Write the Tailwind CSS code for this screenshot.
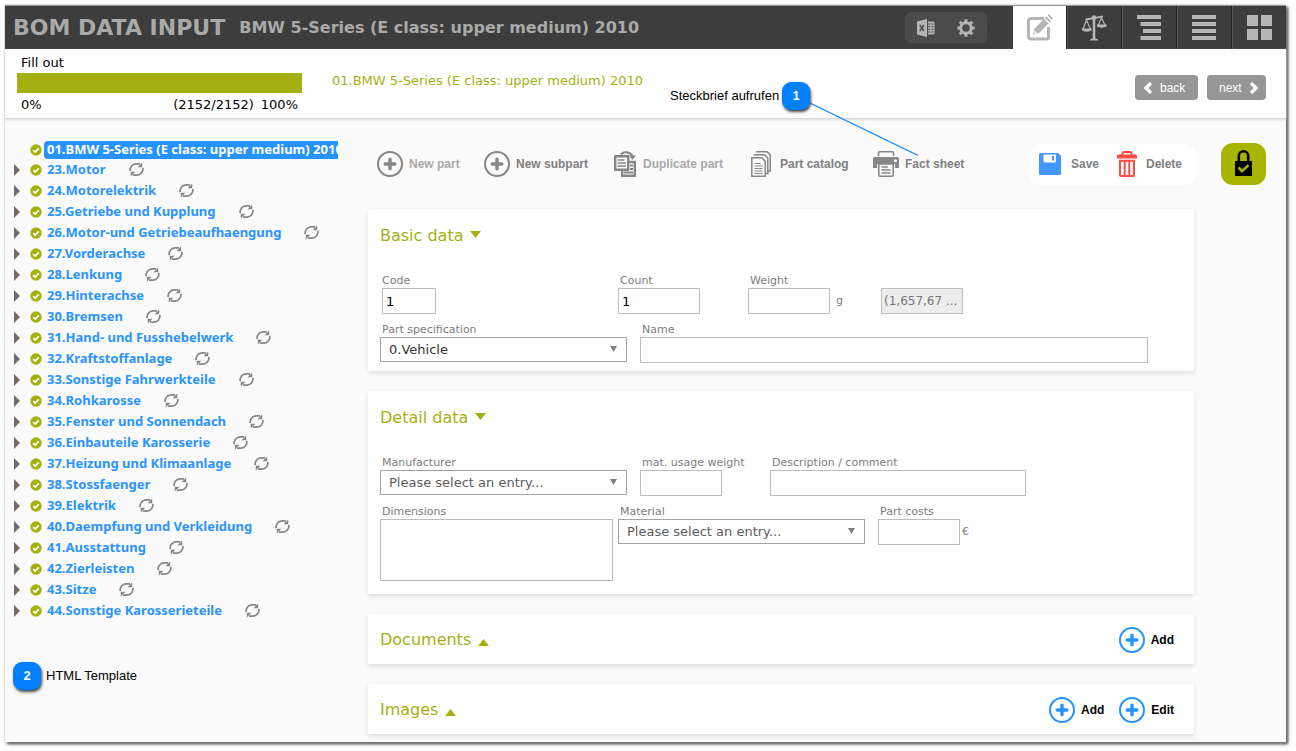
<!DOCTYPE html>
<html lang="en">
<head>
<meta charset="utf-8">
<meta name="viewport" content="width=device-width, initial-scale=1">
<title>BOM Data Input</title>
<script src="https://cdn.jsdelivr.net/npm/@tailwindcss/browser@4"></script>
</head>
<body class="relative flex min-h-screen bg-white pt-[5px] pr-[10px] pb-[9px] pl-[5px] font-['Verdana','DejaVu_Sans',sans-serif] text-[13px] text-black">

<svg class="hidden" aria-hidden="true">
  <symbol id="plus" viewBox="0 0 26 26"><circle cx="13" cy="13" r="12" fill="none" stroke="currentColor" stroke-width="2"/><path d="M13 8.200v9.600M8.200 13h9.600" stroke="currentColor" stroke-width="3.400" stroke-linecap="round"/></symbol>
  <symbol id="refresh" viewBox="0 0 15 15"><g fill="none" stroke="currentColor" stroke-width="1.700"><path d="M1.200 9.200C.6 5.500 3.200 1.900 7 1.900h4"/><path d="M13.800 5.800c.6 3.700-2 7.300-5.800 7.300H4"/></g><path d="M13.200.4v4.800H8.600zM1.800 14.600V9.800h4.600z" fill="currentColor"/></symbol>
  <symbol id="check" viewBox="0 0 12 12"><circle cx="6" cy="6" r="5.700" fill="#a2b20b"/><path d="M3.200 6.100l2 2 3.600-3.800" fill="none" stroke="#fff" stroke-width="1.700"/></symbol>
</svg>

<div class="flex min-w-0 flex-1 flex-col border-t border-[#8f9a94] bg-[#fafafa] shadow-[0_0_2px_#bbb,2px_2px_3px_#333]">

  <header class="flex h-[43px] bg-[#3d3d3d] pl-2 text-[#a9a9a9]">
    <div class="flex min-w-0 flex-1 items-center gap-3.5 whitespace-nowrap">
      <h1 class="text-[22px] font-bold">BOM DATA INPUT</h1>
      <span class="text-[16px] font-bold">BMW 5-Series (E class: upper medium) 2010</span>
    </div>
    <div class="mt-1.5 mr-[26px] flex h-[31px] w-[82px] items-center gap-[22px] rounded-md bg-[#4b4b4b] pl-3 text-[#b4b4b4]">
      <button type="button" aria-label="Export to Excel"><svg class="block h-[18px] w-[18px]" viewBox="0 0 18 18"><path d="M0 2.500L10 0v18L0 15.500zM11 2.500h6.500v13H11z" fill="currentColor"/><path d="M2.800 6l4.200 6M7 6l-4.200 6" stroke="#4b4b4b" stroke-width="1.500"/><path d="M11 5h5.500M11 7.700h5.500M11 10.400h5.500M11 13h5.500" stroke="#4b4b4b"/><path d="M13.800 4v10" stroke="currentColor"/></svg></button>
      <button type="button" aria-label="Settings"><svg class="block size-[18px]" viewBox="0 0 18 18"><circle cx="9" cy="9" r="5.300" fill="none" stroke="currentColor" stroke-width="3"/><path d="M9 .3v3M9 14.700v3M.3 9h3M14.700 9h3M2.800 2.800l2.100 2.100M13.100 13.100l2.100 2.100M15.200 2.800l-2.100 2.100M4.900 13.100l-2.100 2.100" stroke="currentColor" stroke-width="3"/></svg></button>
    </div>
    <nav class="flex text-[#b5b5b5]" aria-label="Views">
      <a href="#" aria-label="Data input" class="flex w-[53px] items-center justify-center bg-white"><svg class="h-[27px] w-[26px]" viewBox="0 0 26 27"><path d="M17 4.500H4a2.500 2.500 0 0 0-2.500 2.500v15.500A2.500 2.500 0 0 0 4 25h15a2.500 2.500 0 0 0 2.500-2.500V13" fill="none" stroke="currentColor" stroke-width="3"/><path d="M6 20.500l1.500-6 9.500-9.500 4.500 4.500-9.500 9.500zM18 4l1.500-1.500L24 7l-1.500 1.500zM20.500 1.500L21.800.3 26 4.500l-1.200 1.300z" fill="currentColor"/><path d="M7.500 16.500l2.500 2.500-2.700.7z" fill="#fff"/></svg></a>
      <a href="#" aria-label="Balance" class="flex w-[55px] items-center justify-center border-l border-[#222] shadow-[inset_1px_0_0_#565656]"><svg class="h-[26px] w-[26px]" viewBox="0 0 26 26"><g fill="none" stroke="currentColor"><path d="M4.500 4.500L22 1.500" stroke-width="2"/><path d="M13 2v22" stroke-width="2.600"/><path d="M5.500 5L1.500 15.500M5.500 5l4.500 10.500M20.500 3l-4 9M20.500 3l4.500 9" stroke-width="1.200"/></g><circle cx="13" cy="2.500" r="2.300" fill="currentColor"/><path d="M.5 13.500h10.500c-.6 2.300-2.400 3.300-5.200 3.300S1 15.800.5 13.500zM15.500 9.500H26c-.6 2.300-2.400 3.300-5.200 3.300s-4.700-1-5.300-3.300zM8.500 25.500c.5-1.500 2-2 4.500-2s4 .5 4.500 2z" fill="currentColor"/></svg></a>
      <a href="#" aria-label="Tree view" class="flex w-[55px] items-center justify-center border-l border-[#222] shadow-[inset_1px_0_0_#565656]"><svg class="h-[25px] w-6" viewBox="0 0 24 25"><path d="M0 0h24v4H0zM3.500 7H24v4H3.500zM6 14h18v4H6zM3.500 21H24v4H3.500z" fill="currentColor"/></svg></a>
      <a href="#" aria-label="List view" class="flex w-[55px] items-center justify-center border-l border-[#222] shadow-[inset_1px_0_0_#565656]"><svg class="h-[25px] w-6" viewBox="0 0 24 25"><path d="M0 0h24v4H0zM0 7h24v4H0zM0 14h24v4H0zM0 21h24v4H0z" fill="currentColor"/></svg></a>
      <a href="#" aria-label="Grid view" class="flex w-[55px] items-center justify-center border-l border-[#222] shadow-[inset_1px_0_0_#565656]"><svg class="h-[25px] w-[25px]" viewBox="0 0 25 25"><path d="M0 0h11v11H0zM14 0h11v11H14zM0 14h11v11H0zM14 14h11v11H14z" fill="currentColor"/></svg></a>
    </nav>
  </header>

  <section class="flex h-[70px] border-b border-[#d6dad9] bg-white pl-3 shadow-[0_1px_2px_#ddd]">
    <div class="w-[285px] pt-1">
      <div id="fill" class="pl-1 leading-5 text-[13px]">Fill out</div>
      <div role="progressbar" aria-labelledby="fill" aria-valuenow="100" class="h-5 bg-[#a4b012]"></div>
      <div class="flex pr-1 pl-1 text-[13px] leading-6"><span class="flex-1">0%</span><span class="mr-[7px]">(2152/2152)</span><span>100%</span></div>
    </div>
    <div class="ml-[30px] flex-1 pt-[22px] text-[13px] leading-5 text-[#a4b012]">01.BMW 5-Series (E class: upper medium) 2010</div>
    <div class="mt-[26px] mr-5 flex h-[25px] gap-[9px] font-['Liberation_Sans',Arial,sans-serif] text-[12px] text-white">
      <button type="button" class="flex w-[63px] items-center gap-[7px] rounded bg-[#969696] pl-2"><svg class="h-3 w-2.5" viewBox="0 0 10 12"><path d="M8 1L3 6l5 5" fill="none" stroke="#fff" stroke-width="3.400"/></svg>back</button>
      <button type="button" class="flex w-[59px] items-center gap-[7px] rounded bg-[#969696] pl-3">next<svg class="h-3 w-2.5" viewBox="0 0 10 12"><path d="M2 1l5 5-5 5" fill="none" stroke="#fff" stroke-width="3.400"/></svg></button>
    </div>
  </section>

  <div class="flex flex-1">
    <aside class="w-[333px] shrink-0 pt-[21px]">
      <ul id="tree" class="font-['Noto_Sans',sans-serif] font-bold text-[#2a94ff]">
        <li class="flex h-[19px] items-center overflow-hidden pl-[25px] whitespace-nowrap">
          <svg class="mr-0.5 size-3 shrink-0"><use href="#check"/></svg>
          <a href="#" class="h-[18px] flex-1 overflow-hidden rounded-l bg-[#2693ff] pl-[3px] leading-4 text-white">01.BMW 5-Series (E class: upper medium) 2010</a>
        </li>
      </ul>
    </aside>

    <main class="min-w-0 flex-1 pl-[30px] pb-2">
      <div class="mt-6 flex h-[42px] items-center pl-[9px] font-['Liberation_Sans',Arial,sans-serif] text-[12px] font-bold whitespace-nowrap text-[#808080]">
        <button type="button" class="flex w-[107px] items-center gap-[6px] text-[#a9a9a9]"><svg class="size-[26px] text-[#868686]"><use href="#plus"/></svg>New part</button>
        <button type="button" class="flex w-[130px] items-center gap-[6px]"><svg class="size-[26px] text-[#868686]"><use href="#plus"/></svg>New subpart</button>
        <button type="button" class="flex w-[137px] items-center gap-[7px] text-[#a9a9a9]"><svg class="h-[26px] w-[22px] text-[#868686]" viewBox="0 0 22 26"><g fill="none" stroke="currentColor"><path d="M7 3.500C9 .3 16.500.2 18.500 5.500" stroke-width="2.200"/><path d="M8.200 11h12.600v13.800H8.200z" fill="#fafafa" stroke-width="2.400"/><path d="M10 21.500h9M16 14.500h3M16 18h3" stroke-width="2"/><path d="M1.200 5.200h13v13.600h-13z" fill="#fafafa" stroke-width="2.400"/><path d="M3.500 9h7M3.500 12h8.500M3.500 15h8.500" stroke-width="1.400"/></g><path d="M15 4.500h7L18.500 9z" fill="currentColor"/></svg>Duplicate part</button>
        <button type="button" class="flex w-[122px] items-center gap-[9px]"><svg class="h-[26px] w-5 text-[#868686]" viewBox="0 0 20 26"><g fill="none" stroke="currentColor" stroke-width="1.500"><path d="M5 .8h11l3.300 3.300V20h-2.300M2.800 3.800h10.800l3.200 3.200v15.500h-2.300M.8 6.800h10l3.400 3.400v15H.8z"/><path d="M3.500 12.500h6M3.500 15h8M3.500 17.500h8M3.500 20h8M3.500 22.500h8" stroke-width="1.200"/></g></svg>Part catalog</button>
        <button type="button" class="flex items-center gap-[6px]"><svg class="h-[26px] w-[26px] text-[#868686]" viewBox="0 0 26 26"><path d="M5.500 5V1.800q0-1 1-1h13q1 0 1 1V5" fill="none" stroke="currentColor" stroke-width="1.600"/><path d="M2 6h22a2 2 0 0 1 2 2v9h-4v-4H4v4H0V8a2 2 0 0 1 2-2z" fill="currentColor"/><circle cx="22.500" cy="9.700" r="1.500" fill="#fff"/><path d="M5.800 13h14.400v10.700q0 1.500-1.500 1.500H7.300q-1.500 0-1.500-1.500z" fill="#fafafa" stroke="currentColor" stroke-width="1.600"/><path d="M8.500 16h6.500M8.500 19h9M8.500 22h9" stroke="currentColor" stroke-width="1.400"/></svg>Fact sheet</button>
        <div class="mr-[25px] ml-auto flex h-[41px] w-[167px] items-center rounded-xl bg-white pl-2.5">
          <button type="button" class="flex w-[78px] items-center gap-2.5"><svg class="h-[22px] w-[22px]" viewBox="0 0 22 22"><path d="M1.500 0H19l3 3v17.500a1.500 1.500 0 0 1-1.500 1.500h-19A1.500 1.500 0 0 1 0 20.500v-19A1.500 1.500 0 0 1 1.500 0z" fill="#4496ff"/><path d="M4.500 1.500h12.500V8a1.500 1.500 0 0 1-1.500 1.500H6A1.500 1.500 0 0 1 4.500 8z" fill="#fff"/><path d="M13 3h2v4.500h-2z" fill="#4496ff"/></svg>Save</button>
          <button type="button" class="flex items-center gap-[9px]"><svg class="h-[26px] w-5" viewBox="0 0 20 26"><path d="M5.500 4V2.200Q5.500 1 6.700 1h6.600q1.200 0 1.200 1.200V4" fill="none" stroke="#ff4c42" stroke-width="2"/><path d="M1.500 3.500h17A1.500 1.500 0 0 1 20 5v2.500H0V5a1.500 1.500 0 0 1 1.500-1.500z" fill="#ff4c42"/><path d="M3 9.800h14v13.700q0 1.500-1.500 1.500h-11Q3 25 3 23.500zM7.700 10v15M12.300 10v15" fill="none" stroke="#ff4c42" stroke-width="2"/></svg>Delete</button>
        </div>
        <button type="button" aria-label="Locked" class="mr-5 flex h-[42px] w-[45px] items-center justify-center rounded-xl bg-[#a7b400] pb-0.5"><svg class="h-[26px] w-[17px]" viewBox="0 0 17 26"><path d="M3.800 12V6a4.700 4.700 0 0 1 9.400 0v6" fill="none" stroke="#000" stroke-width="2.600"/><path d="M0 11h17v15H0z"/><path d="M3.500 17.500l3.500 3.600 6.500-6" fill="none" stroke="#a7b400" stroke-width="2.600"/></svg></button>
      </div>

      <form class="mt-6 mr-[92px] flex flex-col gap-5 text-[11px] text-[#7d7d7d]">
        <section class="bg-white px-3 pt-[15px] pb-2 shadow-[0_2px_4px_#ddd]">
          <h2><button type="button" class="flex h-6 items-center gap-[7px] text-[16px] text-[#a4b012]">Basic data<svg class="mb-1 h-[7px] w-[11px]" viewBox="0 0 11 7"><path d="M0 0h11L5.500 7z" fill="currentColor"/></svg></button></h2>
          <div class="mt-[25px] flex pl-0.5">
            <div class="w-[236px]"><label for="code" class="block h-[15px] leading-4">Code</label><input id="code" value="1" class="block h-[26px] w-[54px] border border-[#bdbdbd] bg-white px-[3px] text-[13px] text-black"></div>
            <div class="w-[130px]"><label for="count" class="block h-[15px] pl-0.5 leading-4">Count</label><input id="count" value="1" class="block h-[26px] w-[82px] border border-[#bdbdbd] bg-white px-[3px] text-[13px] text-black"></div>
            <div class="w-[133px]"><label for="weight" class="block h-[15px] pl-0.5 leading-4">Weight</label><div class="flex items-center gap-[6px]"><input id="weight" class="block h-[26px] w-[82px] border border-[#bdbdbd] bg-white px-[3px] text-[13px] text-black"><span>g</span></div></div>
            <input aria-label="Calculated weight" disabled value="(1,657,67 ..." class="mt-[15px] block h-[26px] w-[82px] border border-[#bdbdbd] bg-[#ededed] px-[2px] text-[12px] text-[#767676]">
          </div>
          <div class="mt-2 flex gap-[13px]">
            <div class="w-[247px]"><label for="spec" class="block h-[15px] pl-0.5 leading-4">Part specification</label>
              <div class="relative"><select id="spec" class="block h-[25px] w-full appearance-none border border-[#a3a3a3] bg-white pt-px pl-2 text-[13px] text-[#333]"><option>0.Vehicle</option></select><svg class="pointer-events-none absolute top-[9px] right-[10px] h-[6px] w-[7px]" viewBox="0 0 7 6"><path d="M0 0h7L3.500 6z" fill="#808080"/></svg></div></div>
            <div class="mr-[34px] flex-1"><label for="name" class="block h-[15px] pl-0.5 leading-4">Name</label><input id="name" class="block h-[26px] w-full border border-[#bdbdbd] bg-white px-[3px] text-[13px] text-black"></div>
          </div>
        </section>

        <section class="bg-white px-3 pt-[15px] pb-[13px] shadow-[0_2px_4px_#ddd]">
          <h2><button type="button" class="flex h-6 items-center gap-[7px] text-[16px] text-[#a4b012]">Detail data<svg class="mb-1 h-[7px] w-[11px]" viewBox="0 0 11 7"><path d="M0 0h11L5.500 7z" fill="currentColor"/></svg></button></h2>
          <div class="mt-[25px] flex">
            <div class="mr-[13px] w-[247px]"><label for="manu" class="block h-[15px] pl-0.5 leading-4">Manufacturer</label>
              <div class="relative"><select id="manu" class="block h-[25px] w-full appearance-none border border-[#a3a3a3] bg-white pt-px pl-2 text-[13px] text-[#5c5c5c]"><option>Please select an entry...</option></select><svg class="pointer-events-none absolute top-[9px] right-[10px] h-[6px] w-[7px]" viewBox="0 0 7 6"><path d="M0 0h7L3.500 6z" fill="#808080"/></svg></div></div>
            <div class="w-[130px]"><label for="usage" class="block h-[15px] pl-0.5 leading-4 whitespace-nowrap">mat. usage weight</label><input id="usage" class="block h-[26px] w-[82px] border border-[#bdbdbd] bg-white px-[3px] text-[13px] text-black"></div>
            <div class="w-[256px]"><label for="desc" class="block h-[15px] pl-0.5 leading-4">Description / comment</label><input id="desc" class="block h-[26px] w-full border border-[#bdbdbd] bg-white px-[3px] text-[13px] text-black"></div>
          </div>
          <div class="mt-2 flex">
            <div class="mr-[5px] w-[233px]"><label for="dim" class="block h-[15px] pl-0.5 leading-4">Dimensions</label><textarea id="dim" class="block h-[62px] w-full resize-none border border-[#bdbdbd] bg-white px-[3px] text-[13px] text-black"></textarea></div>
            <div class="mr-[13px] w-[247px]"><label for="mat" class="block h-[15px] pl-0.5 leading-4">Material</label>
              <div class="relative"><select id="mat" class="block h-[25px] w-full appearance-none border border-[#a3a3a3] bg-white pt-px pl-2 text-[13px] text-[#5c5c5c]"><option>Please select an entry...</option></select><svg class="pointer-events-none absolute top-[9px] right-[10px] h-[6px] w-[7px]" viewBox="0 0 7 6"><path d="M0 0h7L3.500 6z" fill="#808080"/></svg></div></div>
            <div><label for="cost" class="block h-[15px] pl-0.5 leading-4">Part costs</label><div class="flex items-center gap-0.5"><input id="cost" class="block h-[26px] w-[82px] border border-[#bdbdbd] bg-white px-[3px] text-[13px] text-black"><span>€</span></div></div>
          </div>
        </section>

        <section class="flex h-[50px] items-center justify-between bg-white pt-0.5 pr-5 pl-3 shadow-[0_2px_4px_#ddd]">
          <h2><button type="button" class="flex h-6 items-center gap-[7px] text-[16px] text-[#a4b012]">Documents<svg class="mt-1 h-[7px] w-[11px]" viewBox="0 0 11 7"><path d="M0 7h11L5.500 0z" fill="currentColor"/></svg></button></h2>
          <button type="button" class="flex items-center gap-[6px] font-['Liberation_Sans',Arial,sans-serif] text-[12px] font-bold text-black"><svg class="size-[26px] text-[#2693ff]"><use href="#plus"/></svg>Add</button>
        </section>

        <section class="flex h-[50px] items-center justify-between bg-white pt-0.5 pr-5 pl-3 shadow-[0_2px_4px_#ddd]">
          <h2><button type="button" class="flex h-6 items-center gap-[7px] text-[16px] text-[#a4b012]">Images<svg class="mt-1 h-[7px] w-[11px]" viewBox="0 0 11 7"><path d="M0 7h11L5.500 0z" fill="currentColor"/></svg></button></h2>
          <div class="flex gap-[15px] font-['Liberation_Sans',Arial,sans-serif] text-[12px] font-bold text-black">
            <button type="button" class="flex items-center gap-[6px]"><svg class="size-[26px] text-[#2693ff]"><use href="#plus"/></svg>Add</button>
            <button type="button" class="flex items-center gap-[6px]"><svg class="size-[26px] text-[#2693ff]"><use href="#plus"/></svg>Edit</button>
          </div>
        </section>
      </form>
    </main>
  </div>
</div>

<!-- Callouts laid over the page -->
<svg class="pointer-events-none absolute top-[103px] left-[810px] h-[53px] w-[108px]" viewBox="0 0 108 53" aria-hidden="true"><path d="M0 0l108 52.500" stroke="#1e8cff" stroke-width="1.200"/></svg>
<div class="absolute top-[82px] left-[670px] flex items-center gap-[3px] font-['Liberation_Sans',Arial,sans-serif] text-[13px] whitespace-nowrap"><span>Steckbrief aufrufen</span><b class="flex size-7 items-center justify-center rounded-[9px] bg-[#0080ff] text-white shadow-[1px_2px_3px_#444]">1</b></div>
<div class="absolute top-[662px] left-[13px] flex items-center gap-[5px] font-['Liberation_Sans',Arial,sans-serif] text-[13px] whitespace-nowrap"><b class="flex size-7 items-center justify-center rounded-[9px] bg-[#0080ff] text-white shadow-[1px_2px_3px_#444]">2</b><span>HTML Template</span></div>

<script>
const parts = ["23.Motor","24.Motorelektrik","25.Getriebe und Kupplung","26.Motor-und Getriebeaufhaengung","27.Vorderachse","28.Lenkung","29.Hinterachse","30.Bremsen","31.Hand- und Fusshebelwerk","32.Kraftstoffanlage","33.Sonstige Fahrwerkteile","34.Rohkarosse","35.Fenster und Sonnendach","36.Einbauteile Karosserie","37.Heizung und Klimaanlage","38.Stossfaenger","39.Elektrik","40.Daempfung und Verkleidung","41.Ausstattung","42.Zierleisten","43.Sitze","44.Sonstige Karosserieteile"];
document.getElementById("tree").insertAdjacentHTML("beforeend", parts.map(p => `<li class="flex h-[21px] items-center pl-[9px] whitespace-nowrap"><button type="button" aria-label="Expand" class="mr-2.5"><svg class="block h-3 w-[6px]" viewBox="0 0 6 12"><path d="M0 0l6 6-6 6z" fill="#756a66"/></svg></button><svg class="mr-[5px] size-3 shrink-0"><use href="#check"/></svg><a href="#">${p}</a><button type="button" aria-label="Reload" class="ml-[23px] text-[#868686]"><svg class="block size-[15px]"><use href="#refresh"/></svg></button></li>`).join(""));
</script>
</body>
</html>
